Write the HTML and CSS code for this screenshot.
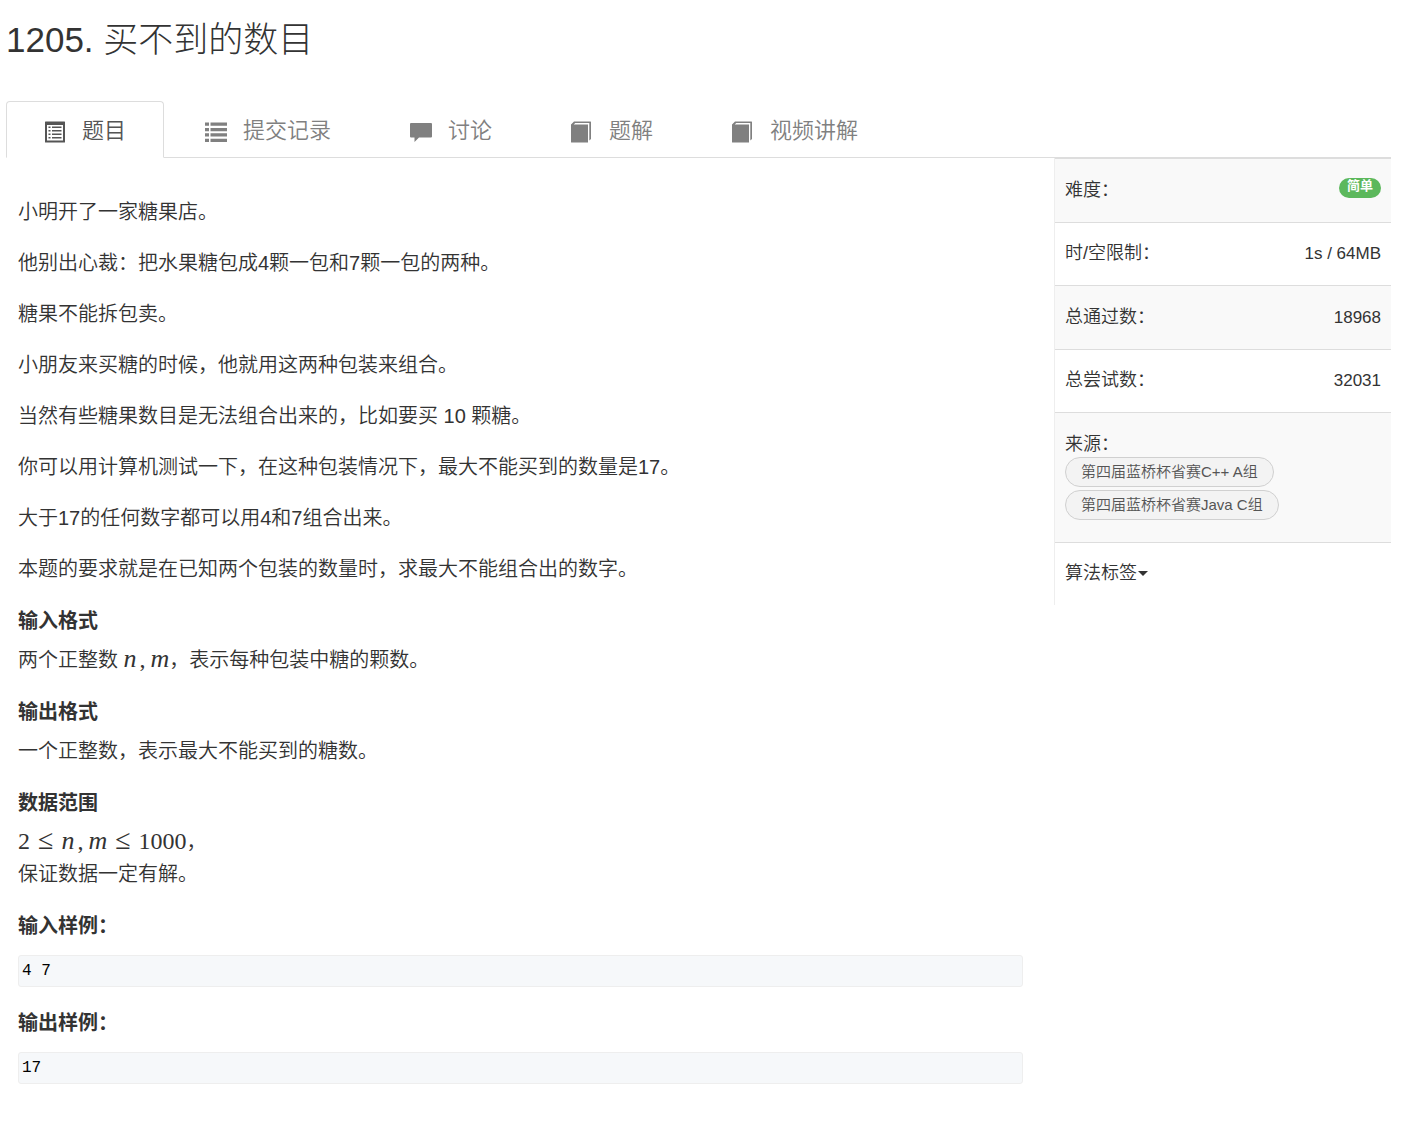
FILE: index.html
```html
<!DOCTYPE html>
<html lang="zh-CN">
<head>
<meta charset="utf-8">
<meta name="viewport" content="width=device-width, initial-scale=1">
<title>1205. 买不到的数目</title>
<link rel="stylesheet" href="styles.css">
</head>
<body>
<div class="page">
  <h1 class="title">1205. 买不到的数目</h1>

  <nav class="tabs">
    <a class="tab tab-active" href="#problem">
      <svg class="icon" viewBox="0 0 22 22" fill="currentColor" aria-hidden="true"><path fill-rule="evenodd" d="M1.500 .5h19q.5 0 .5.5v20q0 .5-.5.500h-19q-.5 0-.5-.5V1q0-.5.5-.5zM3 4v15.500h16V4z"/><path d="M4.500 5.500h2v1.500h-2zM8 5.500h9.500v1.500H8zM4.500 9h2v1.500h-2zM8 9h9.500v1.500H8zM4.500 12.500h2V14h-2zM8 12.500h9.500V14H8zM4.500 16h2v1.500h-2zM8 16h9.500v1.500H8z"/></svg>
      <span>题目</span>
    </a>
    <a class="tab" href="#submissions">
      <svg class="icon" viewBox="0 0 22 22" fill="currentColor" aria-hidden="true"><path d="M0 1.500h4v3.300H0zM5.500 1.500H22v3.300H5.500zM0 6.900h4v3.300H0zM5.500 6.900H22v3.300H5.500zM0 12.300h4v3.300H0zM5.500 12.300H22v3.300H5.500zM0 17.700h4V21H0zM5.500 17.700H22V21H5.500z"/></svg>
      <span>提交记录</span>
    </a>
    <a class="tab" href="#discussion">
      <svg class="icon" viewBox="0 0 22 22" fill="currentColor" aria-hidden="true"><path d="M1 2h20q1 0 1 1v12.500q0 1-1 1H9L4.500 21v-4.500H1q-1 0-1-1V3q0-1 1-1z"/></svg>
      <span>讨论</span>
    </a>
    <a class="tab" href="#solution">
      <svg class="icon" viewBox="0 0 22 22" fill="currentColor" aria-hidden="true"><path d="M0 3.500L3 .5h16.500q.5 0 .5.500v17l-1.700 1.500V2H4.200L2.700 3.500H17V21.500H.5q-.5 0-.5-.5z"/></svg>
      <span>题解</span>
    </a>
    <a class="tab" href="#video">
      <svg class="icon" viewBox="0 0 22 22" fill="currentColor" aria-hidden="true"><path d="M0 3.500L3 .5h16.500q.5 0 .5.500v17l-1.700 1.500V2H4.200L2.700 3.500H17V21.500H.5q-.5 0-.5-.5z"/></svg>
      <span>视频讲解</span>
    </a>
  </nav>

  <div class="layout">
    <main class="content" id="problem">
      <p>小明开了一家糖果店。</p>
      <p>他别出心裁：把水果糖包成4颗一包和7颗一包的两种。</p>
      <p>糖果不能拆包卖。</p>
      <p>小朋友来买糖的时候，他就用这两种包装来组合。</p>
      <p>当然有些糖果数目是无法组合出来的，比如要买 10 颗糖。</p>
      <p>你可以用计算机测试一下，在这种包装情况下，最大不能买到的数量是17。</p>
      <p>大于17的任何数字都可以用4和7组合出来。</p>
      <p>本题的要求就是在已知两个包装的数量时，求最大不能组合出的数字。</p>

      <h2>输入格式</h2>
      <p>两个正整数 <span class="math"><i>n</i><span class="sep">,</span><i>m</i></span>，表示每种包装中糖的颗数。</p>

      <h2>输出格式</h2>
      <p>一个正整数，表示最大不能买到的糖数。</p>

      <h2>数据范围</h2>
      <p><span class="math">2<span class="rel">≤</span><i>n</i><span class="sep">,</span><i>m</i><span class="rel">≤</span>1000</span>，<br>保证数据一定有解。</p>

      <h2>输入样例：</h2>
      <pre><code>4 7</code></pre>

      <h2>输出样例：</h2>
      <pre><code>17</code></pre>
    </main>

    <aside class="side">
      <table class="info">
        <tbody>
          <tr><th scope="row">难度：</th><td><span class="badge">简单</span></td></tr>
          <tr><th scope="row">时/空限制：</th><td>1s / 64MB</td></tr>
          <tr><th scope="row">总通过数：</th><td>18968</td></tr>
          <tr><th scope="row">总尝试数：</th><td>32031</td></tr>
          <tr>
            <th class="sources" scope="row" colspan="2">来源：
              <span class="pills">
                <a class="pill" href="#source-cpp">第四届蓝桥杯省赛C++ A组</a>
                <a class="pill" href="#source-java">第四届蓝桥杯省赛Java C组</a>
              </span>
            </th>
          </tr>
          <tr><th scope="row" colspan="2"><button class="toggle" type="button">算法标签<span class="caret"></span></button></th></tr>
        </tbody>
      </table>
    </aside>
  </div>
</div>
</body>
</html>
```
FILE: styles.css
```css
* {
  box-sizing: border-box;
}

body {
  margin: 0;
  background: #fff;
  color: #333;
  font-family: "Liberation Sans", "Noto Sans CJK SC", sans-serif;
  font-size: 20px;
  font-weight: 350;
  line-height: 32px;
}

.page {
  padding: 20px 12px 60px 6px;
}

.title {
  margin: 0 0 41px;
  font-size: 35px;
  font-weight: 300;
  line-height: 40px;
}

/* Tabs */
.tabs {
  display: flex;
  border-bottom: 1px solid #ddd;
}

.tab {
  display: flex;
  align-items: center;
  gap: 16px;
  margin: 0 3px -1px 0;
  padding: 14px 37px 11px;
  border: 1px solid transparent;
  border-radius: 4px 4px 0 0;
  color: #808080;
  font-size: 22px;
  line-height: 30px;
  text-decoration: none;
}

.tab-active {
  border-color: #ddd #ddd #fff;
  background: #fff;
  color: #555;
}

.icon {
  width: 22px;
  height: 22px;
  margin-top: 1px;
}

/* Columns */
.layout {
  display: grid;
  grid-template-columns: minmax(0, 1fr) 337px;
  align-items: start;
}

.content {
  padding: 38px 31px 0 12px;
}

.content p {
  margin: 0 0 19px;
}

.content h2 {
  margin: 25px 0 12px;
  font-size: 20px;
  font-weight: 700;
  line-height: 22px;
}

.content pre {
  margin: 18px 0 0;
  padding: 0 3px;
  border: 1px solid #eee;
  border-radius: 3px;
  background: #f6f8fa;
  color: #000;
  line-height: 30px;
}

.content code {
  display: block;
  font-family: "Liberation Mono", monospace;
  font-size: 16px;
}

.math {
  font-family: "Liberation Serif", serif;
  font-size: 24px;
  line-height: 24px;
}

.math i {
  font-size: 26px;
}

.sep {
  margin: 0 5px 0 3px;
}

.rel {
  margin: 0 8px;
  font-size: 28px;
}

/* Problem facts */
.side {
  border-left: 1px solid #eee;
}

.info {
  width: 100%;
  border-spacing: 0;
  font-size: 17px;
  line-height: 25px;
}

.info th,
.info td {
  padding: 18px 10px 19px;
  border-top: 1px solid #ddd;
  font-weight: 350;
  text-align: right;
}

.info th {
  font-size: 18px;
  text-align: left;
}

.info tr:nth-child(odd) {
  background: #f9f9f9;
}

.info tr:nth-child(odd) > * {
  padding-top: 19px;
}

.info .sources {
  padding-bottom: 22px;
}

.badge {
  display: inline-block;
  padding: 0 8px 4px;
  border-radius: 10px;
  background: #5cb85c;
  color: #fff;
  font-size: 13px;
  font-weight: 700;
  line-height: 16px;
  vertical-align: top;
}

.pills {
  display: flex;
  flex-direction: column;
  align-items: flex-start;
  gap: 3px;
}

.pill {
  padding: 0 15px;
  border: 1px solid #d0d0d0;
  border-radius: 15px;
  background: #f3f3f3;
  color: #555;
  font-size: 15px;
  line-height: 28px;
  text-decoration: none;
}

.toggle {
  display: flex;
  align-items: center;
  gap: 1px;
  padding: 0;
  border: 0;
  background: none;
  color: inherit;
  font: inherit;
}

.caret {
  border-top: 5px solid #333;
  border-right: 5px solid transparent;
  border-left: 5px solid transparent;
}
```
